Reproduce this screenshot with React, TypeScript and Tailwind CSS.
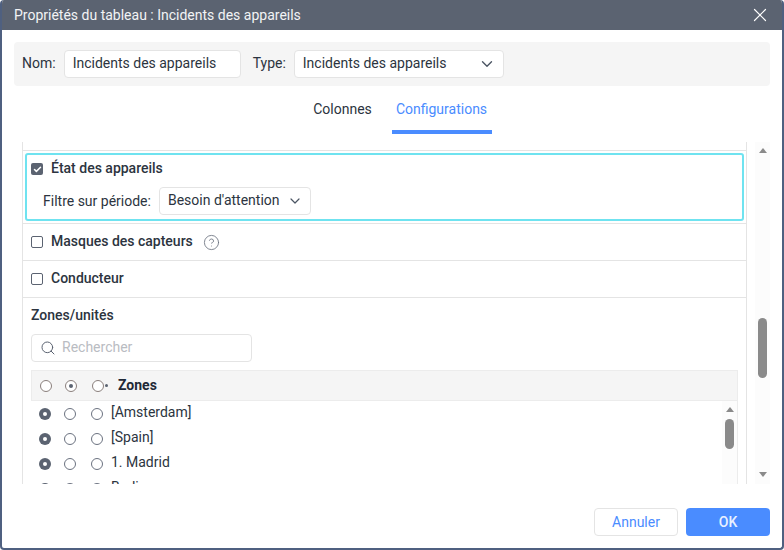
import { Check, ChevronDown, CircleHelp, Search, X } from "lucide-react";

const ZONES = ["[Amsterdam]", "[Spain]", "1. Madrid", "Berlin"];

function Radio({ on = false, dot = false, tinted = false }: { on?: boolean; dot?: boolean; tinted?: boolean }) {
  if (on) {
    return (
      <span className="flex h-3 w-3 shrink-0 items-center justify-center rounded-full bg-[#5b6371]">
        <span className="h-1 w-1 rounded-full bg-white" />
      </span>
    );
  }
  return (
    <span className={`flex h-3 w-3 shrink-0 items-center justify-center rounded-full border ${tinted ? "border-[#8a7f7c]" : "border-[#6b7280]"} bg-white`}>
      {dot && <span className="h-1 w-1 rounded-full bg-[#5b6371]" />}
    </span>
  );
}

function CheckBox({ on = false }: { on?: boolean }) {
  if (on) {
    return (
      <span className="flex h-3 w-3 shrink-0 items-center justify-center rounded-[2px] bg-[#5b6371]">
        <Check size={9} strokeWidth={4} className="text-white" />
      </span>
    );
  }
  return <span className="h-3 w-3 shrink-0 rounded-[2px] border border-[#5b6371] bg-white" />;
}

function Arrow({ down = false }: { down?: boolean }) {
  return (
    <span
      className={`h-0 w-0 shrink-0 border-x-[4.5px] border-x-transparent ${down ? "border-t-[5px] border-t-[#8a8a8a]" : "border-b-[5px] border-b-[#8a8a8a]"}`}
    />
  );
}

export default function App() {
  return (
    <div className="flex h-[550px] w-[784px] flex-col overflow-hidden rounded-[4px] border-2 border-t-0 border-[#4f6080] bg-white font-['Roboto',sans-serif] text-sm text-[#2c3440]">
      <div className="flex h-[30px] shrink-0 items-center justify-between bg-[#5b6371] pl-3 pr-[11px] text-[#f2f3f5]">
        <span>Propriétés du tableau : Incidents des appareils</span>
        <X size={22} strokeWidth={1.3} className="text-white" />
      </div>

      <div className="mx-3 mt-3 flex h-11 shrink-0 items-center rounded-[4px] bg-[#f5f5f5] pl-2 pr-2">
        <span className="pb-[2px]">Nom:</span>
        <div className="ml-2 flex h-7 w-[177px] items-center rounded-[4px] border border-[#e4e4e4] bg-white pl-2">
          <span className="pb-[2px]">Incidents des appareils</span>
        </div>
        <span className="ml-3 pb-[2px]">Type:</span>
        <div className="ml-2 flex h-7 w-[210px] items-center justify-between rounded-[4px] border border-[#e4e4e4] bg-white pl-2 pr-[7px]">
          <span className="pb-[2px]">Incidents des appareils</span>
          <ChevronDown size={18} strokeWidth={1.8} className="text-[#4b5563]" />
        </div>
      </div>

      <div className="flex h-12 shrink-0 justify-center">
        <div className="flex w-[100px] justify-center pt-[13px]">Colonnes</div>
        <div className="ml-[-1px] flex h-12 w-[100px] justify-center border-b-4 border-[#4a8cff] pt-[13px] text-[#4a8cff]">Configurations</div>
      </div>

      <div className="mx-3 mt-2 flex h-[342px] shrink-0 justify-between overflow-hidden">
        <div className="ml-2 flex w-[725px] flex-col overflow-hidden border-x border-[#e4e4e4]">
          <div className="h-[9px] shrink-0 border-b border-[#e4e4e4]" />
          <div className="shrink-0 border-b border-[#e4e4e4] px-[2px] py-[2px]">
            <div className="h-[68px] rounded-[3px] border-2 border-[#6fe3f0] pl-1 pt-[4px]">
              <div className="flex h-5 items-center gap-2 font-medium">
                <CheckBox on />
                <span className="pb-[2px]">État des appareils</span>
              </div>
              <div className="ml-3 mt-2 flex items-center gap-2">
                Filtre sur période:
                <div className="flex h-7 w-[152px] items-center justify-between rounded-[4px] border border-[#e4e4e4] bg-white pl-2 pr-[7px]">
                  <span className="pb-[2px]">Besoin d'attention</span>
                  <ChevronDown size={16} strokeWidth={1.8} className="text-[#4b5563]" />
                </div>
              </div>
            </div>
          </div>
          <div className="flex h-[37px] shrink-0 items-center gap-2 border-b border-[#e4e4e4] pl-2 font-medium">
            <CheckBox />
            <span className="pb-[2px]">Masques des capteurs</span>
            <CircleHelp size={17} strokeWidth={1.2} className="ml-[2px] text-[#6b7280]" />
          </div>
          <div className="flex h-[37px] shrink-0 items-center gap-2 border-b border-[#e4e4e4] pl-2 font-medium">
            <CheckBox />
            <span className="pb-[2px]">Conducteur</span>
          </div>
          <div className="px-2 pt-[7px]">
            <div className="h-5 font-medium leading-5">Zones/unités</div>
            <div className="mt-[9px] flex h-7 w-[221px] items-center gap-[6px] rounded-[4px] border border-[#e4e4e4] pl-2 text-[#b9bcc2]">
              <Search size={16} strokeWidth={1.5} className="text-[#5b6371]" />
              <span className="pb-[2px]">Rechercher</span>
            </div>
            <div className="mt-2 flex h-[31px] w-[707px] items-center border border-[#ececec] bg-[#f5f5f5] pl-2">
              <Radio tinted />
              <span className="ml-[13px]"><Radio dot tinted /></span>
              <span className="ml-[15px]"><Radio tinted /></span>
              <span className="ml-[1px] h-[3px] w-[3px] rounded-full bg-[#5b6371]" />
              <span className="ml-[10px] pb-[2px] font-bold text-[#1f2937]">Zones</span>
            </div>
            <div className="flex w-[707px] justify-between border-r border-[#ececec]">
              <div className="flex flex-col">
                {ZONES.map((z) => (
                  <div key={z} className="flex h-[25px] items-center pl-2">
                    <Radio on />
                    <span className="ml-[13px]"><Radio /></span>
                    <span className="ml-[15px]"><Radio /></span>
                    <span className="ml-2 pb-[4px]">{z}</span>
                  </div>
                ))}
              </div>
              <div className="flex h-[100px] w-[15px] flex-col items-center bg-[#fcfcfc] pt-[6px]">
                <Arrow />
                <span className="mt-[7px] h-[30px] w-[9px] shrink-0 rounded-full bg-[#8a8a8a]" />
              </div>
            </div>
          </div>
        </div>

        <div className="flex w-[15px] flex-col items-center bg-[#fcfcfc] pt-[6px]">
          <Arrow />
          <span className="mt-[165px] h-[60px] w-[9px] shrink-0 rounded-full bg-[#8a8a8a]" />
          <span className="mt-[94px] flex"><Arrow down /></span>
        </div>
      </div>

      <div className="mx-3 mt-6 flex shrink-0 justify-end gap-2">
        <button className="h-7 w-[84px] rounded-[4px] border border-[#e4e4e4] bg-white text-[#4a8cff]">Annuler</button>
        <button className="h-7 w-[84px] rounded-[4px] bg-[#4a8cff] font-medium text-[#e9f1ff]">OK</button>
      </div>
    </div>
  );
}
